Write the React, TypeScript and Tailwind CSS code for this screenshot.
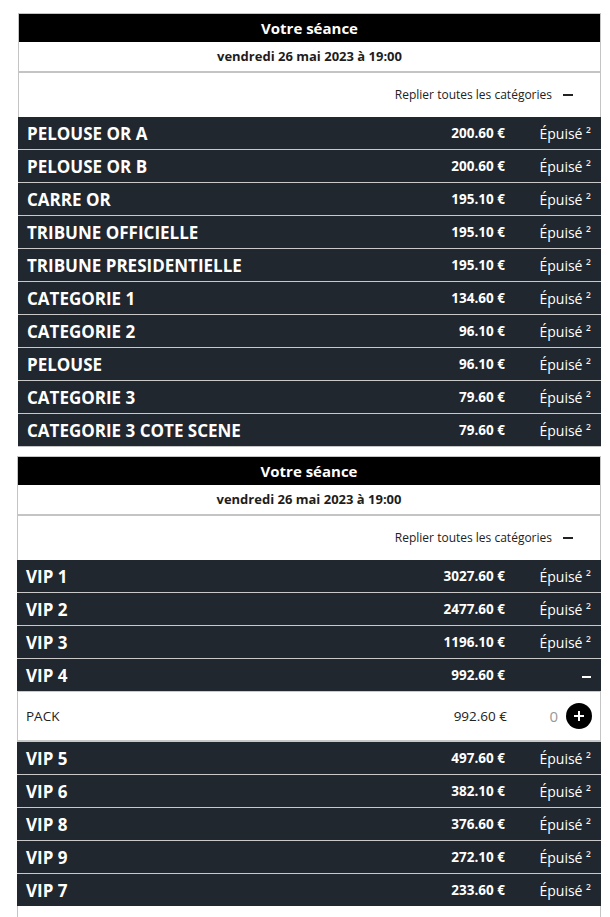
import React from 'react';

type Cat = { name: string; price: string; open?: boolean };

const seance1: Cat[] = [
    { name: 'PELOUSE OR A', price: '200.60 €' },
    { name: 'PELOUSE OR B', price: '200.60 €' },
    { name: 'CARRE OR', price: '195.10 €' },
    { name: 'TRIBUNE OFFICIELLE', price: '195.10 €' },
    { name: 'TRIBUNE PRESIDENTIELLE', price: '195.10 €' },
    { name: 'CATEGORIE 1', price: '134.60 €' },
    { name: 'CATEGORIE 2', price: '96.10 €' },
    { name: 'PELOUSE', price: '96.10 €' },
    { name: 'CATEGORIE 3', price: '79.60 €' },
    { name: 'CATEGORIE 3 COTE SCENE', price: '79.60 €' },
];

const seance2: Cat[] = [
    { name: 'VIP 1', price: '3027.60 €' },
    { name: 'VIP 2', price: '2477.60 €' },
    { name: 'VIP 3', price: '1196.10 €' },
    { name: 'VIP 4', price: '992.60 €', open: true },
    { name: 'VIP 5', price: '497.60 €' },
    { name: 'VIP 6', price: '382.10 €' },
    { name: 'VIP 8', price: '376.60 €' },
    { name: 'VIP 9', price: '272.10 €' },
    { name: 'VIP 7', price: '233.60 €' },
];

const CatRow = ({ cat, last }: { cat: Cat; last: boolean }) => (
    <>
        <div className={'-mx-px flex items-center bg-[#21272e] pl-[9px] text-white ' + (last ? 'h-[32px]' : 'h-[33px] border-b border-[#c9c9c9]')}>
            <span className='flex-1 pt-px text-[17px] font-bold'>{cat.name}</span>
            <span className='text-right text-[13.5px] font-bold'>{cat.price}</span>
            <span className='w-[96px] pr-[10px] text-right text-[14px]'>
                {cat.open ? <span className='inline-block h-[2px] w-[9px] bg-white align-middle' /> : 'Épuisé ²'}
            </span>
        </div>
        {cat.open && (
            <div className='flex h-[50px] items-center border-b-2 border-[#c9c9c9] pl-[8px] text-[13.5px] text-[#222]'>
                <span className='flex-1'>PACK</span>
                <span>992.60 €</span>
                <span className='w-[51px] text-right text-[15px] text-[#999]'>0</span>
                <button className='ml-[8px] mr-[8px] flex h-[26px] w-[26px] items-center justify-center rounded-full bg-black'>
                    <svg width='12' height='12' viewBox='0 0 12 12'>
                        <path d='M6 1v10M1 6h10' stroke='white' strokeWidth='2' />
                    </svg>
                </button>
            </div>
        )}
    </>
);

const Seance = ({ cats, className, tail }: { cats: Cat[]; className: string; tail?: boolean }) => (
    <div className={'border border-[#c4c4c4] bg-white ' + className}>
        <div className='flex h-[28px] items-center justify-center bg-black text-[15px] font-bold text-white'>
            Votre séance
        </div>
        <div className='flex h-[31px] items-center justify-center border-b-2 border-[#c4c4c4] text-[13px] font-bold text-[#1d1d1d]'>
            vendredi 26 mai 2023 à 19:00
        </div>
        <div className='flex h-[44px] items-center justify-end pr-[27px] text-[12px] text-[#222]'>
            Replier toutes les catégories
            <span className='ml-[11px] inline-block h-[2px] w-[10px] bg-[#222]' />
        </div>
        {cats.map((c, i) => (
            <CatRow key={c.name} cat={c} last={i === cats.length - 1} />
        ))}
        {tail && <div className='h-[40px]' />}
    </div>
);

export default function App() {
    return (
        <div className='min-h-screen bg-white pt-[13px] font-["Open_Sans",sans-serif]'>
            <Seance cats={seance1} className='ml-[18px] w-[583px]' />
            <Seance cats={seance2} className='ml-[17px] mt-[9px] w-[584px]' tail />
        </div>
    );
}
